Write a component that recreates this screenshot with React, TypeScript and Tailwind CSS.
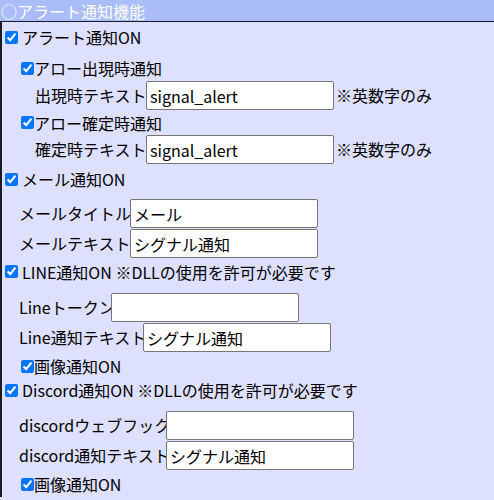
import React from "react";

const font = { fontFamily: '"Noto Sans CJK JP", "Noto Sans", sans-serif' };

function Check({ top = false }: { top?: boolean }) {
  return (
    <input
      type="checkbox"
      defaultChecked
      className={`m-0 size-[13px] shrink-0 accent-[#0075ff] ${top ? "ml-[3px] mr-[4px]" : ""}`}
    />
  );
}

function Field({ label, value, indent, note, w = "", h = "h-[30px]" }: { label: string; value: string; indent: string; note?: string; w?: string; h?: string }) {
  return (
    <div className={`flex items-start ${h} ${indent}`}>
      <span className={`leading-[29px] whitespace-nowrap ${w}`}>{label}</span>
      <input
        type="text"
        defaultValue={value}
        className="h-[29px] w-[188px] shrink-0 rounded-[2px] border border-[#767676] bg-white px-[3px] text-[16px] leading-[27px] text-black outline-none"
        style={font}
      />
      {note && <span className="ml-[2px] leading-[29px] whitespace-nowrap">{note}</span>}
    </div>
  );
}

function TopRow({ text, h, mt = "" }: { text: string; h: string; mt?: string }) {
  return (
    <label className={`flex items-center ${h} ${mt} whitespace-nowrap`}>
      <Check top />
      <span>{text}</span>
    </label>
  );
}

function SubRow({ text, h, mt = "" }: { text: string; h: string; mt?: string }) {
  return (
    <label className={`flex items-center pl-[19px] ${h} ${mt} whitespace-nowrap`}>
      <Check />
      <span>{text}</span>
    </label>
  );
}

export default function App() {
  return (
    <div className="w-[494px] h-[500px] overflow-hidden bg-[#dde1ff] text-[16px] leading-none text-black" style={font}>
      <div className="h-[22px] bg-[#abbdf9] border-b border-[#1a1a2a] px-[1px] flex items-center text-white whitespace-nowrap">
        ○アラート通知機能
      </div>
      <div className="border-l-2 border-[#1a1a2a] -mt-px pt-px">
        <TopRow text="アラート通知ON" h="h-[30px]" />
        <SubRow text="アロー出現時通知" h="h-[26px]" mt="mt-[3px]" />
        <Field label="出現時テキスト" value="signal_alert" indent="pl-[33px]" note="※英数字のみ" w="w-[111px]" h="h-[29px]" />
        <SubRow text="アロー確定時通知" h="h-[25px]" />
        <Field label="確定時テキスト" value="signal_alert" indent="pl-[33px]" note="※英数字のみ" w="w-[111px]" h="h-[29px]" />
        <TopRow text="メール通知ON" h="h-[30px]" />
        <div className="h-[5px]" />
        <Field label="メールタイトル" value="メール" indent="pl-[17px]" w="w-[111px]" />
        <Field label="メールテキスト" value="シグナル通知" indent="pl-[17px]" w="w-[111px]" />
        <TopRow text="LINE通知ON ※DLLの使用を許可が必要です" h="h-[25px]" />
        <div className="h-[9px]" />
        <Field label="Lineトークン" value="" indent="pl-[17px]" w="w-[92px]" />
        <Field label="Line通知テキスト" value="シグナル通知" indent="pl-[17px]" w="w-[124px]" />
        <SubRow text="画像通知ON" h="h-[26px]" />
        <TopRow text="Discord通知ON ※DLLの使用を許可が必要です" h="h-[22px]" />
        <div className="h-[10px]" />
        <Field label="discordウェブフック" value="" indent="pl-[17px]" w="w-[147px]" />
        <Field label="discord通知テキスト" value="シグナル通知" indent="pl-[17px]" w="w-[147px]" />
        <SubRow text="画像通知ON" h="h-[26px]" />
      </div>
    </div>
  );
}
